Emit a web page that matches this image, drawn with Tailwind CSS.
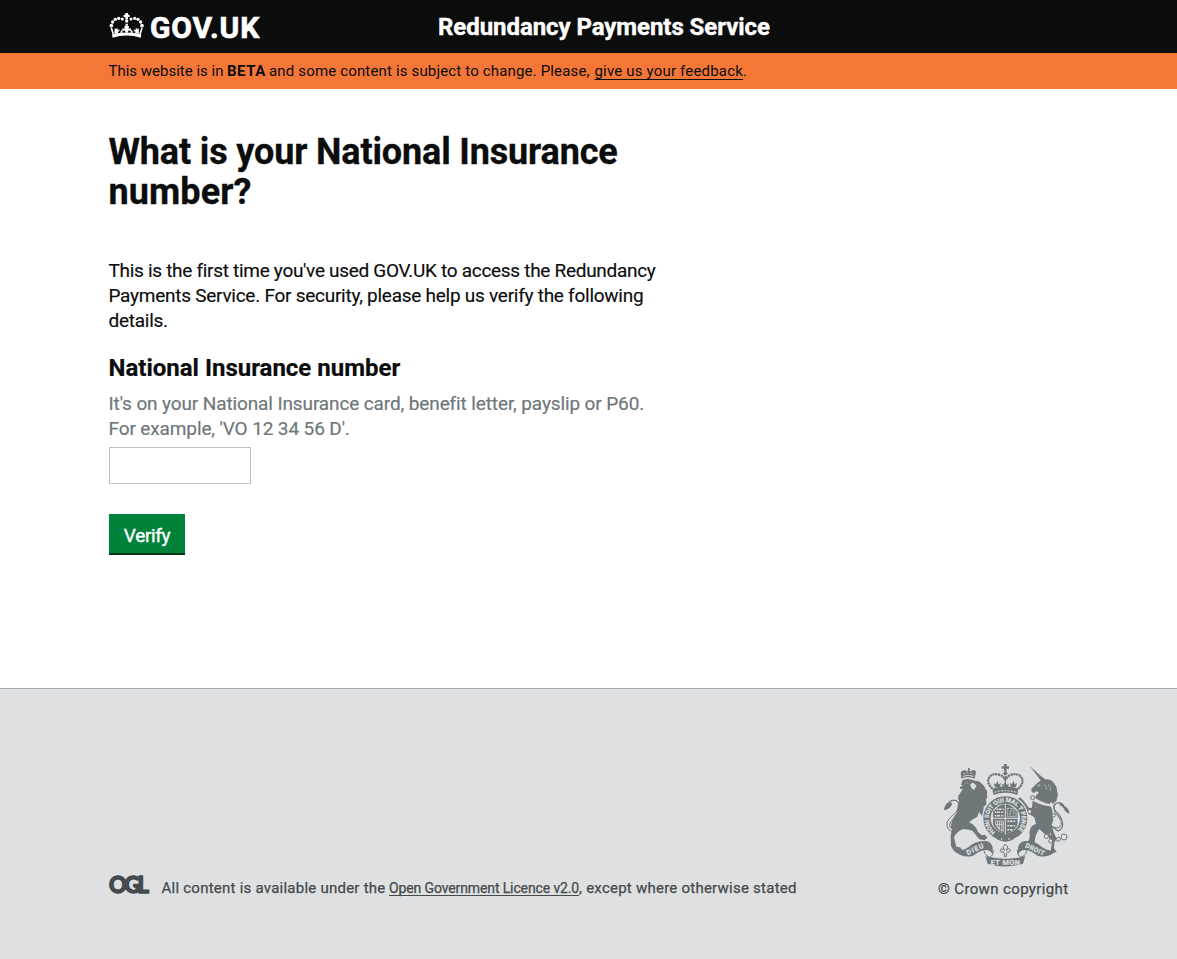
<!DOCTYPE html>
<html lang="en">
<head>
<meta charset="utf-8">
<title>Redundancy Payments Service</title>
<script src="https://cdn.jsdelivr.net/npm/@tailwindcss/browser@4"></script>
</head>
<body class="flex h-[959px] flex-col overflow-hidden bg-white font-['Roboto',sans-serif] text-[#0b0c0c]">
<header class="flex h-[53px] shrink-0 bg-[#0b0c0c] pl-[108px] text-white">
  <a class="flex w-[330px] items-start pt-3">
    <svg class="mt-px ml-px h-[26px] w-[35px] shrink-0" viewBox="27 39 105 78" fill="#fff">
      <path d="M76 39h8v5h5v7h-5v7h-8v-7h-5v-7h5z"/>
      <circle cx="80" cy="63" r="5"/>
      <circle cx="67" cy="57" r="4.5"/><circle cx="56" cy="55" r="5"/><circle cx="46" cy="58" r="5"/><circle cx="38" cy="66" r="5"/><circle cx="34" cy="77" r="5.5"/>
      <circle cx="93" cy="57" r="4.5"/><circle cx="104" cy="55" r="5"/><circle cx="114" cy="58" r="5"/><circle cx="122" cy="66" r="5"/><circle cx="126" cy="77" r="5.5"/>
      <path d="M34 84l7 22M126 84l-7 22" stroke="#fff" stroke-width="5"/>
      <path d="M38 113q42-13 84 0l2-9q-44-13-88 0z"/>
      <path d="M43 101l1-17 4 4 4-5 2 8 5-3-1 6-5 1 3 6zM117 101l-1-17-4 4-4-5-2 8-5-3 1 6 5 1-3 6zM77 98l-3-7-7 3v-9l7 1-1-8h4l-1-7h8l-1 7h4l-1 8 7-1v9l-7-3-3 7zM60 98l5-9 4 9zM100 98l-5-9-4 9z"/>
    </svg>
    <span class="ml-[6px] text-[30px] leading-[31px] font-bold tracking-[0.9px] [-webkit-text-stroke:0.7px_#fff]">GOV.UK</span>
  </a>
  <span class="pt-3 text-2xl leading-[30px] font-bold tracking-[-0.06px] whitespace-nowrap [-webkit-text-stroke:0.4px_#fff]">Redundancy Payments Service</span>
</header>
<div class="flex h-9 shrink-0 bg-[#f47738] pt-[8px] pl-[108.5px] text-[15px] leading-5 whitespace-nowrap">
  <span class="w-[118.5px]">This website is in</span><strong class="w-[42px] tracking-[0.5px]">BETA</strong><span class="w-[325.5px] tracking-[0.16px]">and some content is subject to change. Please,</span><span class="tracking-[0.18px]"><a class="underline decoration-1 underline-offset-[3px]">give us your feedback</a>.</span>
</div>
<main class="flex flex-1 flex-col items-start pt-[43px] pl-[108.5px] text-[19px] leading-[25px] whitespace-nowrap">
  <h1 class="text-4xl leading-10 font-bold tracking-[-0.15px] [-webkit-text-stroke:0.3px_#0b0c0c]">What is your National Insurance<br><span class="tracking-[0.1px]">number?</span></h1>
  <p class="mt-[46px] tracking-[-0.26px] [-webkit-text-stroke:0.15px_#0b0c0c]"><span class="tracking-[-0.3px]">This is the first time you've used GOV.UK to access the Redundancy</span><br>Payments Service. For security, please help us verify the following<br>details.</p>
  <label for="nino" class="mt-5 text-2xl leading-[30px] font-bold [-webkit-text-stroke:0.2px_#0b0c0c]">National Insurance number</label>
  <p class="mt-2 tracking-[-0.12px] text-[#6f777b] [-webkit-text-stroke:0.2px_#6f777b]">It's on your National Insurance card, benefit letter, payslip or P60.<br>For example, 'VO 12 34 56 D'.</p>
  <input id="nino" class="mt-[6px] ml-[0.5px] h-[37px] w-[142px] border border-[#bfc1c3] bg-white outline-none">
  <button class="mt-[30px] ml-[0.5px] h-[41px] w-[76px] border-b-2 border-[#003618] bg-[#00823b] pt-[3px] text-[19px] tracking-[-0.35px] text-white [-webkit-text-stroke:0.4px_#fff]">Verify</button>
</main>
<footer class="flex h-[271px] shrink-0 items-start border-t border-[#a1acb2] bg-[#dee0e2] pl-[108px] text-[15px] leading-5 whitespace-nowrap text-[#454a4c]">
  <svg class="mt-[183px] h-7 w-[46px]" viewBox="0 0 46 28"><text x="1" y="21" font-family="Lato" font-weight="900" font-size="22" textLength="40" lengthAdjust="spacing" fill="#454a4c" stroke="#454a4c" stroke-width="1.3">OGL</text></svg>
  <p class="mt-[189px] ml-[7.5px] flex tracking-[0.24px] [-webkit-text-stroke:0.25px_#454a4c]"><span class="w-[227.5px]">All content is available under the</span><a class="h-[18px] w-[190px] border-b border-[#454a4c] text-sm leading-5 tracking-[-0.12px]">Open Government Licence v2.0</a><span>, except where otherwise stated</span></p>
  <div class="flex flex-1 flex-col items-end pt-[74px] pr-[106px]">
    <svg class="h-[105px] w-[128px]" viewBox="39 24 384 315" fill="#6f777b">
      <!-- centre crown -->
      <path d="M222 27h8v7h7v7h-7v8h-8v-8h-7v-7h7z"/>
      <circle cx="226" cy="55" r="6"/>
      <path d="M188 101C160 80 180 48 210 60Q222 64 224 75M264 101c28-21 8-53-22-41q-12 4-14 15" fill="none" stroke="#6f777b" stroke-width="6.5" stroke-dasharray="7 1.5"/>
      <path d="M226 62v40" stroke="#6f777b" stroke-width="4"/>
      <path d="M187 101q38-14 78 0l-3 19q-36-13-72 0z"/>
      <path d="M194 96l-3-12 7 4 4-11 4 11 7-4-4 13zM258 96l3-12-7 4-4-11-4 11-7-4 4 13zM219 96l-4-10 7 3 4-12 4 12 7-3-4 10z"/>
      <path d="M193 112q33-10 66 0" fill="none" stroke="#dee0e2" stroke-width="3" stroke-dasharray="6 4"/>
      <!-- lion -->
      <path d="M94 71q18-8 40 0l4-20q-3-8-11-5-4 2-6 5l-2-8v-4h-5v4l-2 8q-3-5-7-5-9-1-13 7z"/>
      <path d="M98 64q16-6 34 0M101 55h5M111 54h4M121 55h6" fill="none" stroke="#dee0e2" stroke-width="2.5"/>
      <path d="M98 75q17-7 37 2 14 0 20 9 9 5 11 15 8 7 5 17 3 10-3 17l2 13-9 7-1 17 15-4 2 12-20 4-10-13-5 14q-14 7-25 17 19 7 27 29l12 10 9-2 7 9-8 8-16-3-20-25q-13-7-30-5-17 6-26 24l7 28 11 2 8 9-8 3-18-1-9-14-1-33 4-18-3-5q-1-19 14-40 5-8 6-26l5-13q-6-8-3-17l9-13 5-7-10-1 2-6 8-3-6-3z"/>
      <path d="M121 88l8-5 10 9-7 12-7-5zM105 83l10 2" fill="#dee0e2" stroke="#dee0e2" stroke-width="1"/>
      <path d="M71 230q-23-4-20-26c2-17 37-30 35-55-2-19-24-16-27-1-1 10-8 13-15 14 5-18 16-28 29-26 23 3 26 27 10 43-14 14-32 26-20 41" fill="none" stroke="#6f777b" stroke-width="3"/>
      <path d="M42 165q4-21 19-24l6 5q-5 10-10 14-6 5-15 5z"/>
      <!-- unicorn -->
      <path d="M299 33l34 44 9-6z"/>
      <path d="M300 34l36 40" stroke="#dee0e2" stroke-width="1.2" stroke-dasharray="2 5"/>
      <path d="M334 75l3-10 7 8q20-2 29 13 9 10 8 23l3 10-5 19-12 10q-26-7-49-21l8-16-8-2-6 5-7-3-1-10 18-17z"/>
      <path d="M323 90l5-2 3 4-6 2zM342 88q9 7 7 17M355 88q8 9 7 20" fill="none" stroke="#dee0e2" stroke-width="1.5"/>
      <path d="M317 133q24 16 50 17" fill="none" stroke="#dee0e2" stroke-width="14"/>
      <path d="M315 129l5-12 5 13 5-10 4 13 7-9 2 13 8-8 1 12 9-7-1 14q-24-4-45-19z"/>
      <path d="M319 131q20 13 40 15" fill="none" stroke="#dee0e2" stroke-width="2" stroke-dasharray="4 3"/>
      <path d="M308 137q25 14 53 17 10 12 6 29l3 12-5 15 6 22 9 19-7 12-1 17 8 11-18 3 1-14 4-23-24-21-15-14q-13 17-14 40l-18 11-12 4-9 12-14-2 7-12 18-9 11-11q4-12 1-20 2-20 11-24l9-4-5-20-23-14-15 6-17-10-9-15-13-2-6-10 7-8 10 3 11 14 15 9 7-1-10-12-9-14 10-6 11 12 15 20 9-1z"/>
      <path d="M360 210l24 18q20-9 12-32-7-18-20-28-12-17 4-24 13-3 21 11 5 12 15 16" fill="none" stroke="#6f777b" stroke-width="3.5"/>
      <path d="M365 214q23 11 29-5 1-13-9-24-22-24-8-39" fill="none" stroke="#6f777b" stroke-width="3"/>
      <path d="M389 151q12 5 15 15 7 8 14 11 0-17-14-23-5-11-15-12z"/>
      <g fill="#dee0e2" stroke="#6f777b" stroke-width="3"><circle cx="402" cy="246" r="9"/><circle cx="385" cy="253" r="6"/><circle cx="349" cy="244" r="6.5"/><circle cx="362" cy="258" r="6"/><circle cx="361" cy="237" r="4"/><circle cx="371" cy="181" r="5"/><circle cx="308" cy="128" r="6"/><circle cx="299" cy="170" r="6"/><circle cx="318" cy="156" r="3"/></g>
      <!-- garter and shield -->
      <circle cx="226" cy="190" r="70" fill="#dee0e2"/>
      <circle cx="226" cy="190" r="55" fill="none" stroke="#6f777b" stroke-width="22"/>
      <path id="motto" d="M199.500 233.500A50 50 0 1 1 252.500 233.500" fill="none"/>
      <text font-family="Roboto" font-weight="700" font-size="18" fill="#dee0e2" stroke="#dee0e2" stroke-width=".6"><textPath href="#motto" startOffset="4">HONI SOIT QUI MAL Y PENSE</textPath></text>
      <path d="M189 170q37-46 74 0v36q-5 22-37 30-32-8-37-30z"/>
      <path d="M226 147v92M187 190h78" stroke="#dee0e2" stroke-width="3"/>
      <path d="M199 163h22M194 172h27M194 182h27M232 199h26M232 212h24M232 224h16" stroke="#dee0e2" stroke-width="4.500" stroke-dasharray="5 2 9 3"/>
      <path d="M233 160h20l5 10v15h-25zM240 181q0-18 6-16t5 16" fill="none" stroke="#dee0e2" stroke-width="2.5" stroke-dasharray="5 2"/>
      <path d="M196 198h24v31q-21-7-24-26zM203 199q-3 14 4 23M209 199q-3 14 0 25M215 199v28M198 208h20" fill="none" stroke="#dee0e2" stroke-width="2.5"/>
      <path d="M196 238q30 14 60 0l-5 15q-24 14-50 0z"/>
      <circle cx="215" cy="252" r="2.5" fill="#dee0e2"/><circle cx="237" cy="252" r="2.5" fill="#dee0e2"/>
      <!-- ribbon -->
      <path d="M162 276q-3 24 17 31 10-3 11-22" fill="#dee0e2" stroke="#6f777b" stroke-width="3"/>
      <path d="M290 276q3 24-17 31-10-3-11-22" fill="#dee0e2" stroke="#6f777b" stroke-width="3"/>
      <path d="M72 288q24 2 44-12 20-20 52-18 16 3 20 19v22q-7-17-28-13-19 5-31 16-28 9-57-14zM380 288q-24 2-44-12-20-20-52-18-16 3-20 19v22q7-17 28-13 19 5 31 16 28 9 57-14z"/>
      <path d="M166 304q60 14 120 0l-7 22q-53 17-106 0z"/>
      <g font-family="Roboto" font-weight="700" fill="#dee0e2" stroke="#dee0e2" stroke-width=".6" text-anchor="middle"><text font-size="21" transform="translate(138 289) rotate(-25)" textLength="54">DIEU</text><text font-size="22" x="226" y="329" textLength="88">ET MON</text><text font-size="20" transform="translate(312 289) rotate(25)" textLength="62">DROIT</text></g>
      <!-- fleur-de-lis -->
      <path d="M226 267l7 9-4 11q10-11 12-1-1 8-8 5l-4 3v10h-6v-10l-4-3q-7 3-8-5 2-10 12 1l-4-11z" fill="#dee0e2" stroke="#6f777b" stroke-width="3"/>
    </svg>
    <p class="mt-[11px] pr-[2.5px] tracking-[0.37px] [-webkit-text-stroke:0.25px_#454a4c]">© Crown copyright</p>
  </div>
</footer>
</body>
</html>
